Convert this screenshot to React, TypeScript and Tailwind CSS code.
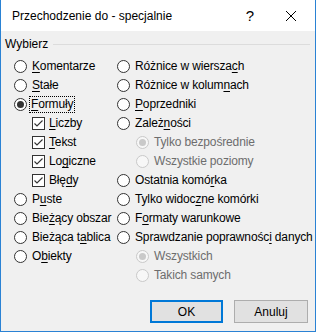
import React from 'react';

type Item = {
  text: string;
  key?: number;
  kind?: 'radio' | 'check' | 'sub';
  checked?: boolean;
  disabled?: boolean;
  focus?: boolean;
};

const Label = ({ text, k }: { text: string; k?: number }) => {
  if (k === undefined || k < 0) return <>{text}</>;
  return (
    <>
      {text.slice(0, k)}
      <span className="underline underline-offset-[2px]">{text[k]}</span>
      {text.slice(k + 1)}
    </>
  );
};

const Radio = ({ checked, disabled }: { checked?: boolean; disabled?: boolean }) => (
  <span
    className={`w-[13px] h-[13px] rounded-full border flex items-center justify-center shrink-0 ${
      disabled ? 'border-[#c9c9c9] bg-[#f7f7f7]' : 'border-[#333333] bg-white'
    }`}
  >
    {checked && (
      <span className={`w-[7px] h-[7px] rounded-full ${disabled ? 'bg-[#c9c9c9]' : 'bg-[#333333]'}`} />
    )}
  </span>
);

const Check = () => (
  <span className="w-[13px] h-[13px] border border-[#333333] bg-white flex items-center justify-center shrink-0">
    <svg width="11" height="11" viewBox="0 0 11 11">
      <path d="M1.5 5.5 L4 8 L9.5 2.5" fill="none" stroke="#333333" strokeWidth="1.1" />
    </svg>
  </span>
);

const Row = ({ item }: { item: Item }) => {
  const kind = item.kind ?? 'radio';
  return (
    <div
      className={`h-[19px] flex items-center ${kind === 'check' ? 'pl-[18px] gap-[4px]' : kind === 'sub' ? 'pl-[19px] gap-[5px]' : 'gap-[5px]'}`}
    >
      {kind === 'check' ? <Check /> : <Radio checked={item.checked} disabled={item.disabled} />}
      <span
        className={`whitespace-nowrap leading-[15px] tracking-[-0.15px] ${item.disabled ? 'text-[#6d6d6d]' : 'text-black'} ${
          item.focus ? 'outline outline-1 outline-dotted outline-black px-[1px] -ml-[2px]' : ''
        }`}
      >
        <Label text={item.text} k={item.key} />
      </span>
    </div>
  );
};

const left: Item[] = [
  { text: 'Komentarze', key: 0 },
  { text: 'Stałe', key: 0 },
  { text: 'Formuły', key: 0, checked: true, focus: true },
  { text: 'Liczby', key: 0, kind: 'check' },
  { text: 'Tekst', key: 0, kind: 'check' },
  { text: 'Logiczne', key: 2, kind: 'check' },
  { text: 'Błędy', key: 3, kind: 'check' },
  { text: 'Puste', key: 1 },
  { text: 'Bieżący obszar', key: 3 },
  { text: 'Bieżąca tablica', key: 9 },
  { text: 'Obiekty', key: 1 },
];

const right: Item[] = [
  { text: 'Różnice w wierszach', key: 17 },
  { text: 'Różnice w kolumnach', key: 15 },
  { text: 'Poprzedniki', key: 0 },
  { text: 'Zależności', key: 5 },
  { text: 'Tylko bezpośrednie', kind: 'sub', checked: true, disabled: true },
  { text: 'Wszystkie poziomy', kind: 'sub', disabled: true },
  { text: 'Ostatnia komórka', key: 13 },
  { text: 'Tylko widoczne komórki', key: 11 },
  { text: 'Formaty warunkowe', key: 1 },
  { text: 'Sprawdzanie poprawności danych', key: 22 },
  { text: 'Wszystkich', kind: 'sub', checked: true, disabled: true },
  { text: 'Takich samych', kind: 'sub', disabled: true },
];

const App = () => {
  return (
    <div
      className="w-[316px] h-[332px] flex flex-col border-l border-r border-b border-[#2a82d4] bg-[#f0f0f0] text-[12px] text-black"
      style={{ fontFamily: '"Liberation Sans", Arial, sans-serif' }}
    >
      {/* Title bar */}
      <div className="h-[31px] bg-white flex items-center shrink-0">
        <span className="pl-[11px] text-[12px] leading-[15px] pt-[1px]">Przechodzenie do - specjalnie</span>
        <span className="ml-auto w-[20px] text-center text-[15px] leading-none mr-[26px]">?</span>
        <span className="w-[10px] h-[10px] mr-[19px] flex">
          <svg width="10" height="10" viewBox="0 0 10 10">
            <path d="M0 0 L10 10 M10 0 L0 10" stroke="#000" strokeWidth="1" />
          </svg>
        </span>
      </div>

      {/* Body */}
      <div className="flex-1 flex flex-col pt-[6px]">
        <div className="h-[15px] flex items-center pl-[4px] pr-[5px] gap-[5px]">
          <span className="leading-[15px]">Wybierz</span>
          <div className="flex-1 h-px bg-[#dcdcdc]" />
        </div>

        <div className="flex mt-[5px] pl-[13px]">
          <div className="w-[103px] flex flex-col">
            {left.map((it) => (
              <Row key={it.text} item={it} />
            ))}
          </div>
          <div className="flex flex-col">
            {right.map((it) => (
              <Row key={it.text} item={it} />
            ))}
          </div>
        </div>

        <div className="flex justify-end gap-[11px] pr-[7px] mt-[15px]">
          <button className="w-[73px] h-[23px] bg-[#e1e1e1] border-2 border-[#0078d7] leading-none">OK</button>
          <button className="w-[74px] h-[23px] bg-[#e1e1e1] border border-[#adadad] leading-none">Anuluj</button>
        </div>
      </div>
    </div>
  );
};

export default App;
